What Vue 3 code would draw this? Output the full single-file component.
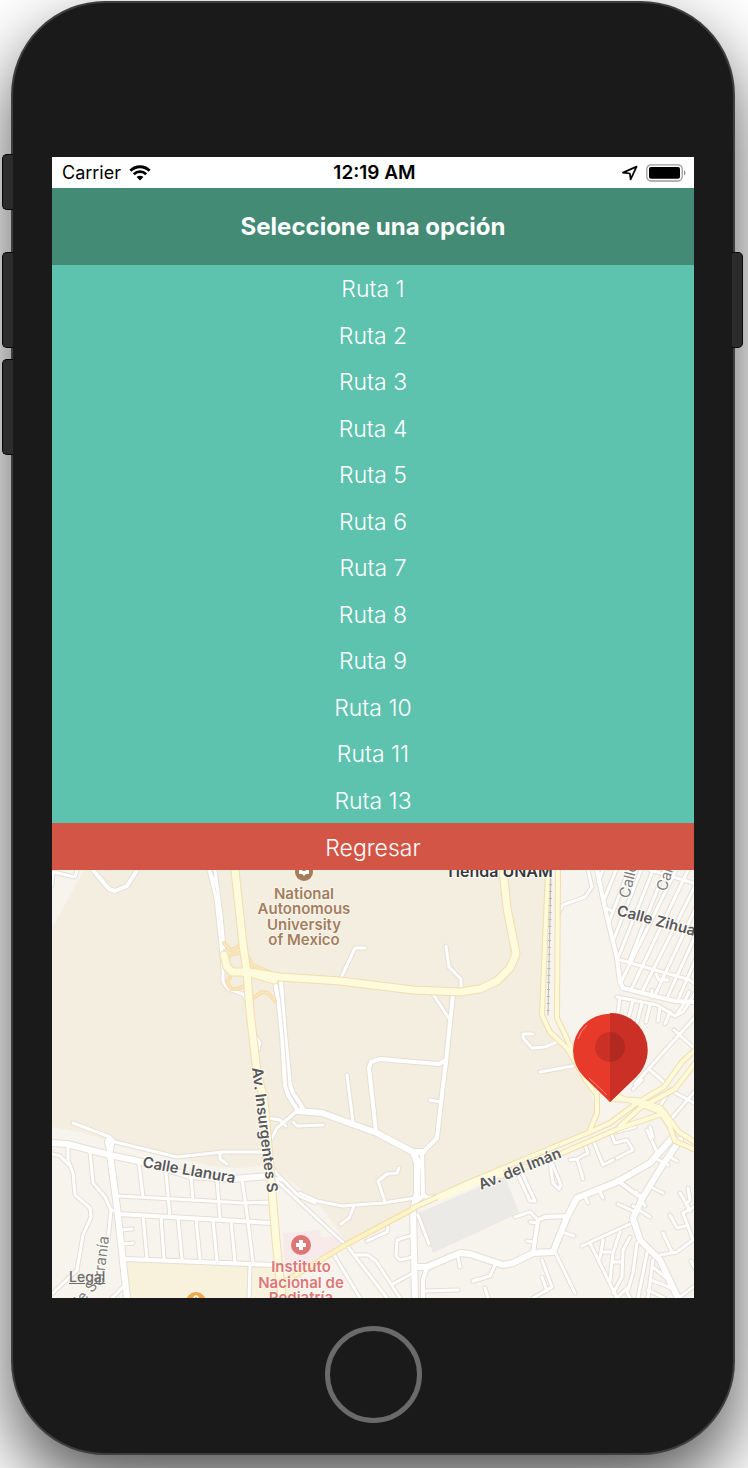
<script setup>
const routes = ['Ruta 1', 'Ruta 2', 'Ruta 3', 'Ruta 4', 'Ruta 5', 'Ruta 6', 'Ruta 7', 'Ruta 8', 'Ruta 9', 'Ruta 10', 'Ruta 11', 'Ruta 13']

// Narrow residential streets and driveways
const lanes = [
  'M52 885L53 872L75 877L77 870',
  'M209 870L216 898L221 945L223 968L223 982L228 989L243 994L247 1001',
  'M215 870L221 915L224 948M209 870L218 890',
  'M256 1037L260 1043L258 1050',
  'M340 980L355 948L365 948',
  'M446 946L449 967L461 979L461 989M433 994L450 1020',
  'M347 1075L353 1122M430 1100L440 1102M293 1122L297 1126L323 1125',
  'M268 1118L280 1120L286 1126M297 1111L277 1128L270 1142',
  'M264 1158L277 1174L299 1196L315 1203M276 1180L348 1247L387 1298',
  'M300 1193L317 1201L342 1206L383 1203L415 1198',
  'M385 1202L378 1181L387 1174L397 1173L399 1168',
  'M354 1206L349 1218L341 1224M367 1241L387 1232L388 1227',
  'M356 1255L368 1255L376 1261L400 1298M333 1253L360 1298',
  'M413 1235L397 1240L396 1256L400 1260L413 1257M393 1284L413 1273',
  'M418 1215L429 1244M425 1291L458 1290M458 1257L460 1267M473 1281L478 1279',
  'M73 1123L110 1137L115 1142L177 1157L223 1152L268 1152',
  'M220 1152L220 1159L227 1164',
  'M68 1147L68 1160L73 1173L75 1195L90 1208L91 1217L83 1235L77 1270L53 1293',
  'M52 1154L60 1156L69 1165',
  'M90 1152L93 1183L105 1197L111 1210L118 1211M111 1210L108 1240',
  'M118 1196L193 1200L243 1203L272 1202',
  'M139 1164L143 1197M166 1173L170 1217M191 1177L193 1200M217 1180L220 1218M242 1179L248 1221',
  'M143 1216L147 1259M161 1217L164 1259M178 1218L182 1260M196 1219L200 1260M213 1220L217 1261M231 1221L235 1262M248 1222L253 1263',
  'M122 1230L132 1229M123 1244L133 1243M250 1265L249 1298M112 1298L123 1287',
  'M262 1176L283 1180M260 1203L271 1203',
  'M588 870L592 887L585 897L563 905L559 912',
  'M605 908L613 911M617 959L690 980L696 985',
  'M617 997L657 1005L675 1016L683 1012L696 992',
  'M598 882L603 870M604 900L616 870M609 922L629 870M613 941L641 870M618 958L653 870M629 962L665 870M621 982L676 870M631 990L688 870M642 992L697 882M655 995L697 905M667 998L697 932M678 1000L697 956',
  'M650 870L697 884',
  'M620 998L618 1012M633 1000L628 1020M642 1003L637 1023M650 1005L646 1022M660 1007L658 1021M670 1012L665 1024',
  'M652 990L652 997M656 974L659 980L668 980M677 1014L682 1007L689 992',
  'M674 1030L694 1048M635 1084L696 1016M650 1070L665 1083M633 1089L642 1080M660 1106L670 1090L696 1104M671 1119L696 1090',
  'M540 1072L573 1066M533 1034L523 1034L523 1038L532 1048L545 1047L557 1042',
  'M538 1220L530 1212L515 1217M530 1222L538 1223M527 1241L533 1242M565 1233L574 1236M555 1252L575 1293',
  'M495 1265L490 1276L474 1281M485 1288L488 1298M542 1260L552 1287L533 1298M542 1277L547 1291',
  'M518 1175L530 1201L535 1201L523 1175M550 1163L553 1183L559 1189L561 1185L552 1163',
  'M585 1145L588 1153L577 1159L570 1160M577 1159L580 1168L583 1179',
  'M593 1140L603 1165L613 1160M617 1158L633 1150L627 1140L615 1143L611 1133L635 1127',
  'M647 1130L657 1152L652 1163M650 1127L653 1137M585 1197L588 1203M600 1192L603 1198',
  'M618 1204L633 1211M633 1206L650 1217M653 1188L663 1193M655 1158L668 1165M670 1157L677 1161M636 1192L645 1206',
  'M582 1246L630 1224M590 1243L617 1298',
  'M603 1240L600 1258M620 1232L613 1253L610 1280M630 1237L623 1250L622 1277L613 1293M637 1243L633 1273L627 1293L630 1298M647 1253L638 1298M653 1260L648 1298',
  'M603 1252L612 1252M613 1262L622 1262M651 1280L674 1289M654 1268L670 1281M617 1298L628 1287M648 1290L664 1298',
  'M660 1255L677 1252L693 1240L683 1213L696 1206M663 1233L672 1252M670 1215L677 1228L685 1226',
  'M680 1193L687 1205L690 1211M688 1188L690 1200L686 1204M696 1270L691 1261M680 1297L696 1285'
]

// Wider collector streets
const streets = [
  'M93 870L109 889L115 891L127 886L137 870',
  'M275 982L279 1005L282 1035L285 1085L288 1095L298 1111M281 982L285 1035L290 1085L293 1093L304 1110',
  'M453 995L450 1022L446 1062L443 1085L437 1138L423 1152M446 1060L439 1064L380 1059L371 1062L369 1068L376 1132',
  'M422 1152L423 1195L428 1198L437 1197M415 1153L422 1168M423 1196L416 1201',
  'M118 1214L170 1217L271 1223M125 1259L275 1265',
  'M597 870L605 908L617 958L620 982L623 988L650 995L675 1001L696 1002',
  'M110 1155L107 1142L109 1138L112 1144L110 1155',
  'M533 1253L538 1220L545 1217L567 1216M617 1180L637 1195L643 1197',
  'M427 1267L423 1280L423 1298'
]

const avenues = [
  'M298 1111L322 1113L377 1133L413 1152L423 1152',
  'M413 1152L417 1163L417 1193L413 1210L415 1298',
  'M52 1143L67 1144L110 1155L147 1163L190 1176L233 1179L269 1176',
  'M110 1155L117 1207L127 1298',
  'M415 1267L427 1267L460 1253L470 1254L503 1265L513 1263L533 1253L553 1252L567 1217L577 1198L617 1182L650 1163L673 1137',
  'M680 1140L662 1166L643 1197L633 1218L640 1240L660 1260L678 1298'
]

const ramps = [
  'M224 943L230 950L235 949L240 945M240 953L232 954L227 958L227 967',
  'M230 977L227 982L231 989L238 989L244 986M247 955L252 965L270 972',
  'M253 998L262 992L268 993L275 1001'
]

const highways = [
  'M224 955L227 967L232 972L250 972L280 977L340 981L413 990L460 992L480 989L497 981L510 968L516 954L507 908L503 870',
  'M250 973L274 980',
  'M235 870L243 945L247 972L250 1012L257 1072L264 1100L271 1180L276 1240L282 1298'
]

const links = [
  'M548 870L542 1015L550 1032L567 1048L586 1080L597 1095L597 1113L590 1130',
  'M558 870L557 1018L570 1045L574 1057',
  'M413 1208L470 1182L590 1132L610 1123L637 1103L664 1087L682 1062L696 1049',
  'M500 1176L553 1157L620 1128L665 1113',
  'M620 1126L640 1108L675 1089L696 1062',
  'M597 1090L637 1103L660 1112L670 1127L675 1141L696 1150M610 1099L637 1100L661 1108L679 1132L696 1143'
]
</script>

<template>
  <main class="stage">
    <div class="phone">
      <i class="key mute"></i>
      <i class="key volume-up"></i>
      <i class="key volume-down"></i>
      <i class="key power"></i>

      <div class="screen">
        <div class="status">
          <div class="carrier">
            <span>Carrier</span>
            <svg width="22" height="16" viewBox="0 0 22 16" aria-label="Wi-Fi">
              <path d="M1.4 5.7A13.7 13.7 0 0 1 20.6 5.7" fill="none" stroke="#000" stroke-width="2.8" />
              <path d="M4.8 9.2A8.8 8.8 0 0 1 17.2 9.2" fill="none" stroke="#000" stroke-width="2.7" />
              <path d="M7.6 12.1A4.8 4.8 0 0 1 14.4 12.1L11 15.6Z" />
            </svg>
          </div>
          <time>12:19 AM</time>
          <div class="indicators">
            <svg width="16" height="16" viewBox="0 0 16 16" aria-label="Location">
              <path d="M1 7.6L14.6 1.6L8.6 14.4L7.9 8.5Z" fill="none" stroke="#000" stroke-width="1.7" stroke-linejoin="round" />
            </svg>
            <svg width="41" height="18" viewBox="0 0 41 18" aria-label="Battery full">
              <rect x="0.8" y="0.8" width="35.4" height="16.2" rx="4.2" fill="#fff" stroke="#9c9c9c" stroke-width="1.3" />
              <rect x="3" y="3" width="31" height="11.8" rx="2" />
              <path d="M38 6.2A3.2 3.2 0 0 1 38 11.6Z" fill="#8f8f8f" />
            </svg>
          </div>
        </div>

        <h1>Seleccione una opción</h1>
        <nav class="routes" aria-label="Rutas">
          <button v-for="route in routes" :key="route" type="button">{{ route }}</button>
        </nav>
        <button class="back" type="button">Regresar</button>

        <section class="map" aria-label="Mapa">
          <svg class="canvas" viewBox="52 870 642 428">
            <path class="ground" d="M52 870H694V1298H52Z" />
            <path class="campus" d="M84 870H548L543 1015L588 1083L597 1113L590 1130L470 1184L347 1243L318 1203L270 1165L240 1168L210 1166L177 1157L113 1142L80 1132L52 1127V928Z" />
            <path class="school" d="M127 1260L272 1265L290 1278L300 1298H131Z" />
            <path class="clinic" d="M283 1233L320 1230L321 1237L340 1237L346 1243L300 1267L285 1270Z" />
            <path class="lot" d="M418 1213L505 1176L519 1213L433 1253Z" />

            <g class="road">
              <path v-for="d in lanes" :key="d" class="lane edge" :d="d" />
              <path v-for="d in streets" :key="d" class="street edge" :d="d" />
              <path v-for="d in avenues" :key="d" class="avenue edge" :d="d" />
              <path v-for="d in lanes" :key="d" class="lane" :d="d" />
              <path v-for="d in streets" :key="d" class="street" :d="d" />
              <path v-for="d in avenues" :key="d" class="avenue" :d="d" />
              <path class="median" d="M280 995L284 1035L288 1085" />
              <path v-for="d in ramps" :key="d" class="ramp edge" :d="d" />
              <path v-for="d in ramps" :key="d" class="ramp" :d="d" />
              <path class="diagonal edge" d="M284 1282L347 1244L413 1209" />
              <path v-for="d in links" :key="d" class="link edge" :d="d" />
              <path v-for="d in highways" :key="d" class="highway edge" :d="d" />
              <path class="diagonal" d="M284 1282L347 1244L413 1209" />
              <path v-for="d in links" :key="d" class="link" :d="d" />
              <path v-for="d in highways" :key="d" class="highway" :d="d" />
              <path class="highway" d="M440 1197L480 1180L500 1173" />
              <path class="rail" d="M551 870L548 1015" />
              <path class="ties" d="M551 870L548 1015" />
            </g>

            <g class="place university">
              <circle cx="304" cy="872" r="9" />
              <path class="glyph" d="M299 868Q302 871 304 871Q306 871 309 868V874Q306 873 304 876Q302 873 299 874Z" />
              <text x="304" y="899">National</text>
              <text x="304" y="914">Autonomous</text>
              <text x="304" y="930">University</text>
              <text x="304" y="945">of Mexico</text>
            </g>
            <text class="store" x="499" y="877">Tienda UNAM</text>
            <g class="place hospital">
              <circle cx="301" cy="1245" r="10" />
              <path class="glyph" d="M299 1240H303V1243H306V1247H303V1250H299V1247H296V1243H299Z" />
              <text x="301" y="1272">Instituto</text>
              <text x="301" y="1288">Nacional de</text>
              <text x="301" y="1303">Pediatría</text>
            </g>
            <circle cx="196" cy="1302" r="10" fill="#f0a84c" />
            <circle cx="196" cy="1298" r="2" fill="none" stroke="#fff" stroke-width="1.3" />

            <g class="name">
              <text transform="translate(252 1068) rotate(83)">Av. Insurgentes S</text>
              <text transform="translate(142 1167) rotate(10)">Calle Llanura</text>
              <text transform="translate(481 1190) rotate(-22)">Av. del Imán</text>
              <text transform="translate(616 915) rotate(15)">Calle Zihuatanejo</text>
            </g>
            <g class="name minor">
              <text transform="translate(629 899) rotate(-76)">Calle</text>
              <text transform="translate(666 892) rotate(-72)">Calle</text>
              <text transform="translate(77 1310) rotate(-48)">de S</text>
              <text transform="translate(103 1286) rotate(-83)">erranía</text>
            </g>

            <g class="pin">
              <path fill="#e83a2b" d="M610 1102L584 1077A37 37 0 1 1 636 1077Z" />
              <path fill="#cb3027" d="M610 1013A37 37 0 0 1 636 1077L610 1102Z" />
              <circle cx="610" cy="1047" r="15" fill="#cb3027" />
              <path fill="#b12a22" d="M610 1032A15 15 0 0 1 610 1062Z" />
              <path d="M578 1039Q581 1030 587 1025M589 1078L607 1095" fill="none" stroke="#f5867c" stroke-width="1" />
            </g>
          </svg>
          <a class="legal" href="#legal">Legal</a>
        </section>
      </div>

      <button class="home" type="button" aria-label="Inicio"></button>
    </div>
  </main>
</template>

<style>
body {
  margin: 0;
  background: #fff;
}
</style>

<style scoped>
.stage {
  padding: 1px 13px 13px 11px;
  overflow: hidden;
  font-family: Inter, "Liberation Sans", sans-serif;
}

.phone {
  position: relative;
  display: flex;
  flex-direction: column;
  align-items: center;
  box-sizing: border-box;
  padding: 154px 39px 30px;
  border: 2px solid #3c3e3f;
  border-radius: 94px;
  background: #1a1a1a;
  box-shadow: 0 32px 72px rgba(0, 0, 0, 0.68);
}

.key {
  position: absolute;
  left: -11px;
  box-sizing: border-box;
  width: 11px;
  height: 96px;
  border: 1px solid #080808;
  border-right: 0;
  border-radius: 5px 0 0 5px;
  background: #2c2c2c;
}

.mute {
  top: 151px;
  height: 56px;
}

.volume-up {
  top: 249px;
}

.volume-down {
  top: 356px;
}

.power {
  top: 249px;
  right: -10px;
  left: auto;
  border: 1px solid #080808;
  border-left: 0;
  border-radius: 0 5px 5px 0;
}

.screen {
  width: 100%;
  background: #fff;
}

.status {
  display: grid;
  grid-template-columns: 1fr auto 1fr;
  align-items: center;
  height: 31px;
  padding: 0 7px 0 10px;
  color: #000;
  font-size: 18px;
  line-height: 31px;
}

.status svg {
  display: block;
}

.carrier,
.indicators {
  display: flex;
  align-items: center;
  gap: 8px;
}

.indicators {
  justify-content: flex-end;
}

time {
  font-size: 19px;
  font-weight: 600;
}

h1 {
  margin: 0;
  background: #448b76;
  color: #fff;
  font-size: 24px;
  font-weight: 700;
  line-height: 77px;
  text-align: center;
}

.routes {
  display: grid;
  grid-auto-rows: 1fr;
  min-height: 558px;
  background: #5dc2ae;
}

.routes button,
.back {
  display: block;
  width: 100%;
  padding: 2px 0 0;
  border: 0;
  background: none;
  color: #fff;
  font-family: inherit;
  font-size: 23px;
  font-weight: 300;
  text-align: center;
}

.back {
  height: 47px;
  background: #d35545;
}

.map {
  position: relative;
}

.canvas {
  display: block;
  width: 100%;
  height: auto;
}

.ground { fill: #f7f4ee; }
.campus { fill: #f4eee1; }
.school { fill: #f8f1dc; }
.clinic { fill: #f8eaea; }
.lot { fill: #ebeae7; }

.road path {
  fill: none;
  stroke: #fff;
  stroke-linecap: round;
  stroke-linejoin: round;
}

.road .lane { stroke-width: 3px; }
.road .lane.edge { stroke-width: 5px; }
.road .street { stroke-width: 4px; }
.road .street.edge { stroke-width: 6px; }
.road .avenue { stroke-width: 6px; }
.road .avenue.edge { stroke-width: 8px; }
.road .edge { stroke: #e4ded5; }

.road .median {
  stroke: #e5dfd6;
  stroke-width: 1px;
}

.road .ramp {
  stroke: #fde5b4;
  stroke-width: 2px;
}

.road .ramp.edge { stroke-width: 4px; }

.road .diagonal {
  stroke: #fdf3c4;
  stroke-width: 4px;
}

.road .diagonal.edge { stroke-width: 6px; }

.road .link {
  stroke: #fdfad9;
  stroke-width: 4px;
}

.road .link.edge { stroke-width: 6px; }

.road .highway {
  stroke: #fdfbdc;
  stroke-width: 7px;
}

.road .highway.edge { stroke-width: 9px; }

.road .ramp.edge,
.road .diagonal.edge,
.road .link.edge,
.road .highway.edge {
  stroke: #f3dcae;
}

.road .rail {
  stroke: #b9b8b6;
  stroke-width: 1px;
}

.road .ties {
  stroke: #b9b8b6;
  stroke-width: 3px;
  stroke-linecap: butt;
  stroke-dasharray: 1 6;
}

text {
  stroke: #fffdf8;
  stroke-linejoin: round;
  stroke-width: 2px;
  paint-order: stroke;
  font-size: 15px;
  font-weight: 600;
}

.place text {
  text-anchor: middle;
  stroke-width: 1px;
}

.university { fill: #a37e5c; }
.hospital { fill: #de7676; }
.place .glyph { fill: #fff; }

.store {
  fill: #37373d;
  text-anchor: middle;
  font-size: 16px;
}

.name {
  fill: #58585a;
}

.minor text {
  fill: #7e7e7e;
  font-weight: 400;
}

.legal {
  position: absolute;
  bottom: 12px;
  left: 17px;
  color: #6b6b6b;
  font-size: 14px;
  font-weight: 500;
  line-height: 18px;
}

.home {
  box-sizing: border-box;
  width: 97px;
  height: 97px;
  margin-top: 28px;
  padding: 0;
  border: 5px solid #6a6a6a;
  border-radius: 50%;
  background: none;
}
</style>
